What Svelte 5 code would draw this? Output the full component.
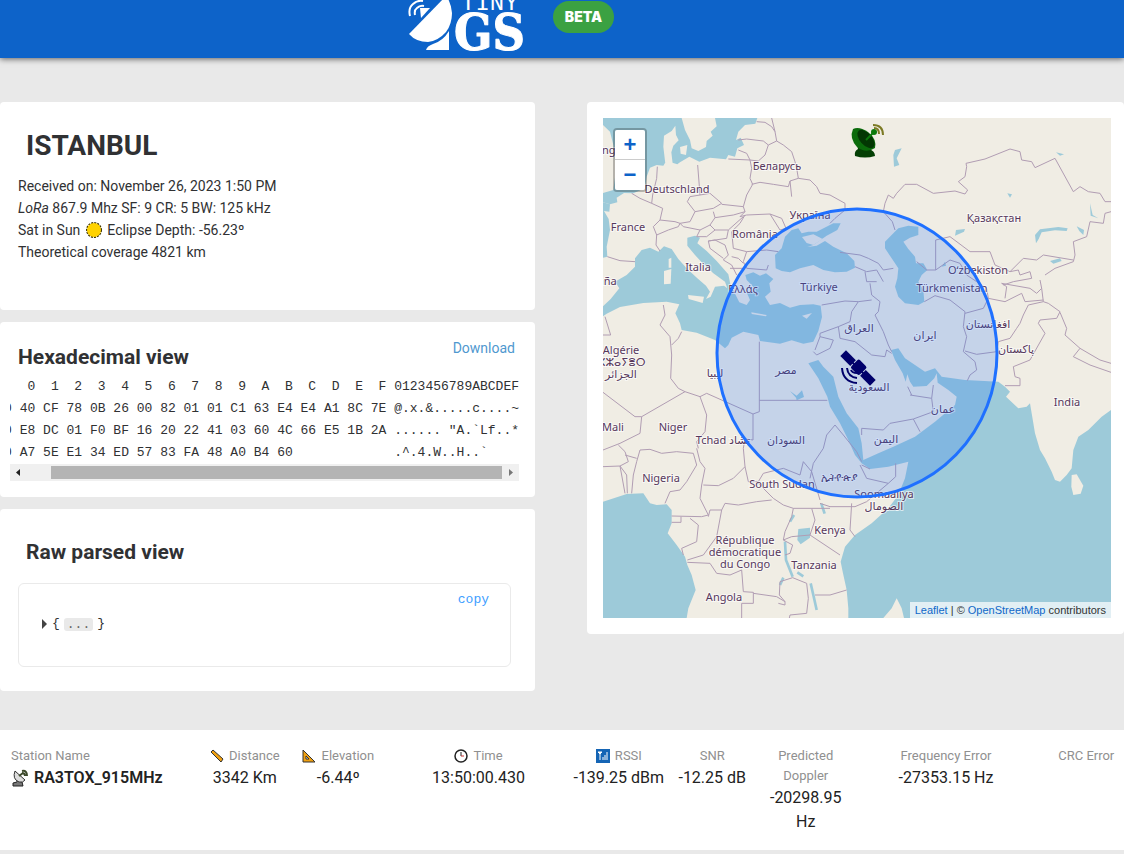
<script lang="ts">
	type Label = { x: number; y: number; text: string };

	const hexRows = [
		{
			offset: '0000',
			bytes: '40 CF 78 0B 26 00 82 01 01 C1 63 E4 E4 A1 8C 7E',
			ascii: '@.x.&.....c....~'
		},
		{
			offset: '0010',
			bytes: 'E8 DC 01 F0 BF 16 20 22 41 03 60 4C 66 E5 1B 2A',
			ascii: '...... "A.`Lf..*'
		},
		{
			offset: '0020',
			bytes: 'A7 5E E1 34 ED 57 83 FA 48 A0 B4 60',
			ascii: '.^.4.W..H..`'
		}
	];

	const digits = '0123456789ABCDEF';
	const hexHeader = '    ' + [...digits].map((d) => '  ' + d).join('') + ' ' + digits;
	const hexDump = [
		hexHeader,
		...hexRows.map((r) => `${r.offset} ${r.bytes.padEnd(47)} ${r.ascii.padEnd(16)}`)
	].join('\n');

	// country labels, in map pixels
	const labels: Label[] = [
		{ x: 14, y: 36, text: 'England' },
		{ x: 74, y: 75, text: 'Deutschland' },
		{ x: 174, y: 52, text: 'Беларусь' },
		{ x: 207, y: 101, text: 'Україна' },
		{ x: 25, y: 113, text: 'France' },
		{ x: 152, y: 120, text: 'România' },
		{ x: 95, y: 153, text: 'Italia' },
		{ x: -5, y: 167, text: 'España' },
		{ x: 391, y: 104, text: 'Қазақстан' },
		{ x: 375, y: 156, text: 'Oʻzbekiston' },
		{ x: 349, y: 174, text: 'Türkmenistan' },
		{ x: 216, y: 173, text: 'Türkiye' },
		{ x: 140, y: 175, text: 'Ελλάς' },
		{ x: 256, y: 214, text: 'العراق' },
		{ x: 322, y: 221, text: 'ایران' },
		{ x: 385, y: 210, text: 'افغانستان' },
		{ x: 413, y: 235, text: 'پاکستان' },
		{ x: 464, y: 288, text: 'India' },
		{ x: 18, y: 236, text: 'Algérie' },
		{ x: 14, y: 248, text: 'ⵍⵣⵣⴰⵢⴻⵔ' },
		{ x: 18, y: 260, text: 'الجزائر' },
		{ x: 112, y: 259, text: 'ليبيا' },
		{ x: 183, y: 256, text: 'مصر' },
		{ x: 266, y: 273, text: 'السعودية' },
		{ x: 340, y: 295, text: 'عمان' },
		{ x: 283, y: 325, text: 'اليمن' },
		{ x: 10, y: 313, text: 'Mali' },
		{ x: 70, y: 313, text: 'Niger' },
		{ x: 120, y: 326, text: 'Tchad تشاد' },
		{ x: 183, y: 326, text: 'السودان' },
		{ x: 58, y: 364, text: 'Nigeria' },
		{ x: 179, y: 370, text: 'South Sudan' },
		{ x: 236, y: 363, text: 'ኢትዮጵያ' },
		{ x: 281, y: 380, text: 'Soomaaliya' },
		{ x: 281, y: 392, text: 'الصومال' },
		{ x: 227, y: 416, text: 'Kenya' },
		{ x: 142, y: 426, text: 'République' },
		{ x: 142, y: 438, text: 'démocratique' },
		{ x: 142, y: 450, text: 'du Congo' },
		{ x: 211, y: 451, text: 'Tanzania' },
		{ x: 121, y: 483, text: 'Angola' }
	];

	// map shapes use a grid three times finer than the map pixels
	const seas = [
		'M9 9H245L255 45 270 75 275 100 295 108 318 96 320 78 338 62 332 50 350 34 345 9H472L466 26 435 30 415 50 408 75 422 68 432 90 412 100 405 125 385 120 378 133 330 128 298 140 268 125 240 142 232 148 212 142 195 144 190 152 170 150 150 158 140 185 135 220 100 235 72 234 50 248 52 262 30 268 9 262V234L40 225 48 165 40 90 30 50 9 30Z',
		'M9 262L30 268 28 290 12 288 26 312 30 345 20 395 22 425 9 428Z',
		'M105 430L125 405 150 398 175 410 192 394 215 402 235 432 262 462 292 490 318 512 330 530 318 552 332 545 345 515 372 512 382 520 375 500 340 475 305 442 285 420 262 392 262 368 285 362 300 368 292 385 320 408 350 438 385 478 392 512 402 530 418 562 440 570 450 555 440 532 468 528 455 510 440 495 436 480 460 472 480 482 498 475 520 492 508 505 512 530 495 545 510 570 540 564 570 578 600 570 640 568 662 572 666 606 655 648 640 680 610 686 575 676 540 686 480 678 475 660 430 650 395 668 385 690 375 700 345 675 290 653 245 645 240 625 226 595 238 568 200 560 130 564 60 576 20 596 9 604V574L32 552 58 520 45 500 80 480 105 455Z',
		'M527 460L525 420 545 400 555 365 575 345 595 340 605 355 625 350 650 350 700 325 722 325 712 345 680 362 640 390 622 396 650 392 675 378 700 395 740 415 763 438 765 458 740 470 705 472 670 465 640 450 600 460 570 472 545 468Z',
		'M925 332L955 335 955 360 930 368 910 380 925 402 945 425 948 445 970 445 982 465 965 480 955 500 970 525 973 560 955 570 915 565 895 545 885 515 892 490 895 460 875 430 855 400 855 380 880 355 895 340Z',
		'M603 704L625 745 655 735 670 755 700 785 715 845 740 895 775 940 785 985 790 1035 835 1015 880 995 945 965 1005 920 1065 870 1070 845 1045 825 1013 803 1010 775 1003 790 980 813 940 815 930 800 922 778 917 800 908 775 885 735 873 705 895 700 915 730 945 750 975 770 1005 760 1025 785 1095 795 1195 800 1215 815 1230 830 1218 845 1255 880 1280 875 1290 865 1295 895 1305 955 1320 1005 1335 1030 1355 1070 1365 1095 1380 1100 1400 1080 1415 1060 1420 1005 1435 965 1465 945 1505 905 1533 885V1509H745V1480L740 1425 728 1370 722 1340 735 1295 765 1260 815 1225 865 1180 895 1140 915 1090 925 1040 865 1055 810 1062 785 1045 765 1020 745 975 720 925 690 875 682 845 655 790 625 745Z',
		'M9 1160L80 1137 130 1135 150 1165 170 1170 200 1168 215 1185 215 1225 203 1255 230 1290 255 1325 262 1350 275 1380 287 1425 265 1480 260 1509H9Z'
	];

	const islands = [
		'M192 62L215 48 226 32 228 60 236 76 220 92 214 112 218 146 196 146 190 95Z',
		'M240 96L262 90 258 120 242 116Z',
		'M206 432L214 428 214 458 206 458Z',
		'M192 468L214 462 212 506 192 508Z',
		'M264 540L312 545 308 564 266 552Z',
		'M454 592L500 600 498 604 455 597Z',
		'M606 602L636 594 620 611Z',
		'M606 366L640 358 668 372 640 390 620 384Z',
		'M1415 1080L1430 1078 1450 1112 1442 1136 1420 1140 1414 1115Z',
		'M850 1509L875 1480 890 1450 905 1480 912 1509Z'
	];

	const lakes = [
		'M595 1242L630 1238V1268L602 1288 592 1275Z',
		'M1308 385L1305 360 1320 343 1375 336 1403 340 1400 348 1365 346 1325 352 1316 372Z',
		'M1430 334L1452 345 1450 360 1438 348Z',
		'M1350 438L1380 430 1385 438 1360 446Z',
		'M1068 345L1095 342 1092 350 1065 362Z',
		'M1025 455L1035 440 1038 452Z',
		'M880 120L885 105 905 100 890 130 898 150 882 155Z',
		'M1470 265L1478 300 1495 310 1472 302Z',
		'M1368 112L1392 118 1380 122Z',
		'M570 828L590 842 606 826 612 846 590 856 588 848Z',
		'M1222 235L1236 238 1230 248Z'
	];

	const rivers = [
		'M555 1280L558 1335 578 1385',
		'M632 1405L640 1440 650 1485',
		'M664 1166L674 1196',
		'M570 1220L582 1200',
		'M592 1372L610 1384',
		'M540 1410L550 1388'
	];

	const borders = [
		'M415 75L440 72 490 78 505 90 530 78 525 50 515 35 495 22 470 20M525 50L515 9M530 78L550 90 575 110 585 140 590 160 595 190 570 198 565 215 520 208 480 202 455 208',
		'M505 90L495 120 475 138 450 135M385 132L450 135 455 160 450 190 458 208 440 240 430 275 435 290M415 105L440 115 450 135',
		'M595 190L630 195 650 215 660 235 690 240 735 265 735 285 705 310 690 325M570 198L575 245',
		'M435 290L420 305 440 300 510 297 545 310 558 340 540 345 510 297',
		'M293 150L300 240 270 245 262 260 285 290 340 280M300 240L330 235 365 265 340 280M365 268L430 275M340 290L345 308 400 300 435 290',
		'M285 290L270 320 240 325 250 335 300 345 330 330 345 308M160 335L180 315 225 320 240 325 235 335 205 345 170 360 160 335M95 235L120 250 155 265 188 280 180 315M172 155L170 190 158 240 155 265M170 360L168 390 180 408',
		'M330 330L345 345 385 345 430 305M300 345L290 365 320 365 345 345M385 345L380 370 325 378 330 400 370 430M325 378L345 375 375 390 385 420 370 435 395 450 410 480M435 300L420 325 395 350 400 400 440 410 500 405 535 410M440 410L430 440 440 460 500 465 505 450M395 425L415 430 430 445M390 460L430 460',
		'M22 425L60 437 105 440M720 412L780 420 805 430 835 445 850 465 880 460M765 455L800 470 830 465 850 500M795 470L800 500 830 500',
		'M885 345L877 320 850 290 855 265 865 240 880 250 890 235 915 208 950 208 1000 235 1065 228 1095 237 1103 225 1075 200 1095 185 1100 155 1098 145 1155 132 1230 102 1260 110 1265 135 1295 140 1305 158 1365 130 1420 230 1440 215 1465 230 1500 235 1515 260 1533 260',
		'M1533 290L1515 295 1510 325 1470 320 1460 365 1420 380 1425 420 1420 440 1365 460 1335 480M1007 465V375L1050 365 1110 410 1170 410 1185 450 1230 470 1270 430 1310 435 1330 420 1420 435M950 440L980 465 1007 465 1050 435 1080 445 1100 480 1130 500M1230 470L1255 465 1260 480 1290 470 1295 490 1240 500 1210 510',
		'M973 560L1005 542 1050 555 1095 590 1090 635 1100 665 1090 710 1125 740 1130 765 1110 780 1102 797M1095 708L1130 718 1190 710 1195 680 1230 670 1250 640 1260 625 1270 600 1285 570 1330 560 1345 565',
		'M1095 595L1150 580 1165 550 1160 520 1130 500M1165 550L1215 560 1265 535 1275 560 1330 555M1205 505L1220 515 1215 550M1205 505L1290 520 1310 535 1325 520 1320 495M1325 520L1330 560',
		'M1345 565L1380 590 1370 610 1320 615 1315 625 1335 655 1290 735 1240 755 1245 785 1260 790 1260 812 1215 812M1380 592L1400 640 1395 660 1440 700 1500 735 1533 745M1440 700L1420 725 1470 750 1533 772',
		'M810 505L815 540 840 560 835 590 825 600 850 650 865 690 875 710M765 680L815 720 855 725 860 705 875 715M640 710L650 720 690 700 700 675 660 665 645 705M660 655L715 635 720 670 765 680M715 635L750 620 755 590 775 560 735 558 665 570M775 560L815 555M660 665V655',
		'M478 680V890L459 897V975L430 970M478 856H682M300 845L320 835 459 897M190 570L195 600 180 630 210 665 215 720 212 790 235 820 255 830 300 845M215 690L235 670 245 650M255 830L125 905 105 905 9 832M125 905L120 955 60 985 9 1005M9 660L32 660 15 605M300 845L320 900 315 950 290 980 295 1000',
		'M705 930L680 960 670 1000 640 1045 630 1090M705 930L730 960 770 1010 785 1040M930 840L995 850 1000 810M995 850L1000 890 940 912 960 950M940 912L870 925 850 945 785 940V960M923 815L935 840',
		'M9 1055L60 1053 75 1135M95 1135L100 1080 110 1040 120 1005 150 1003 185 1015 230 1010 280 1015 290 1050 260 1100 240 1125 210 1130 195 1165M60 1053L85 1040 75 1010 55 990M75 1020L110 1030M60 1053L80 1080 82 1135',
		'M290 1000L300 1040 315 1060 305 1110 300 1150 325 1200 305 1205 215 1203M310 1110L355 1112 400 1090 435 1055 445 1100 475 1100M325 1205L330 1185 365 1185 375 1165 415 1170 470 1160 515 1155M470 1100L520 1150 550 1170 580 1180M435 1055L430 1000 435 970',
		'M365 1185L350 1265 310 1320 262 1335M215 1222H243V1205M270 1210L295 1230 290 1280 245 1300 250 1320M262 1342L330 1345 350 1375 390 1380 425 1365 430 1430 460 1432V1465H425V1509M460 1435L530 1445 555 1460 555 1470 535 1465',
		'M580 1180L575 1205 555 1250 550 1275 575 1265 630 1260 720 1320M580 1180L635 1180 645 1215 630 1260M635 1180L690 1180M690 1175L660 1165M755 1165L750 1245 765 1265M475 1100L490 1075 550 1060 600 1080 610 1040 635 1070 660 1155M690 1175L765 1175 800 1160 865 1105M780 1050L800 1090 865 1105M785 1050L810 1062M887 1045V1085L865 1105M578 1388L540 1400 538 1440 555 1460M578 1388L620 1405 625 1450 620 1495 570 1500 568 1509M645 1440L690 1440 740 1425M550 1275L578 1290 570 1315 555 1320'
	];
</script>

<header class="topbar">
	<svg class="logo" width="118" height="58" viewBox="0 0 118 58" role="img" aria-label="Tiny GS">
		<path d="M38 -4 1 34Q8 42 20 42Q30 41 38 32Q44 24 44 13Q43 2 38 -4Z" fill="#fff" />
		<path d="M41 31V50H18Q19 46 25 44Q35 41 41 31Z" fill="#fff" />
		<path d="M12 8 22 8 13 18Z" fill="#fff" />
		<path d="M2 16Q0 8 5 4Q9 0 15 1M7 15Q6 10 9 8Q12 5 16 6" fill="none" stroke="#fff" stroke-width="2" />
		<text class="logo-tiny" x="53" y="10">TINY</text>
		<text class="logo-gs" x="46" y="50">GS</text>
	</svg>
	<span class="beta">BETA</span>
</header>

<main class="columns">
	<div class="details">
		<section class="card packet">
			<h1>ISTANBUL</h1>
			<p>Received on: November 26, 2023 1:50 PM</p>
			<p><em>LoRa</em> 867.9 Mhz SF: 9 CR: 5 BW: 125 kHz</p>
			<p>
				Sat in Sun
				<svg class="sun" width="18" height="18" viewBox="0 0 18 18" aria-hidden="true">
					<circle cx="9" cy="9" r="7" fill="none" stroke="#3a3000" stroke-width="2" stroke-dasharray="2 1" />
					<circle cx="9" cy="9" r="7" fill="#ffd200" />
				</svg>
				Eclipse Depth: -56.23º
			</p>
			<p>Theoretical coverage 4821 km</p>
		</section>

		<section class="card hex">
			<div class="hex-head">
				<h2>Hexadecimal view</h2>
				<a href="#download">Download</a>
			</div>
			<div class="hex-scroll">
				<pre>{hexDump}</pre>
			</div>
			<div class="scrollbar">
				<svg width="17" height="17" viewBox="0 0 17 17"><path d="M10 5v7L6 8.500z" fill="#222" /></svg>
				<div class="track"><div class="thumb"></div></div>
				<svg width="17" height="17" viewBox="0 0 17 17"><path d="M7 5v7l4-3.500z" fill="#777" /></svg>
			</div>
		</section>

		<section class="card raw">
			<h2>Raw parsed view</h2>
			<div class="json">
				<button class="copy" type="button">copy</button>
				<div class="tree">
					<svg width="6" height="10" viewBox="0 0 6 10"><path d="M0 0v10l5-5z" fill="#444" /></svg>
					<span>&#123;</span>
					<button class="ellipsis" type="button">...</button>
					<span>&#125;</span>
				</div>
			</div>
		</section>
	</div>

	<section class="card map-card">
		<div class="map">
			<svg
				class="map-canvas"
				viewBox="0 0 508 500"
				preserveAspectRatio="xMidYMid slice"
				role="img"
				aria-label="Satellite coverage map"
			>
				<svg width="508" height="500" viewBox="9 9 1524 1500">
					{#each seas as d}<path class="sea" {d} />{/each}
					{#each islands as d}<path class="island" {d} />{/each}
					{#each lakes as d}<path class="sea" {d} />{/each}
					{#each rivers as d}<path class="river" {d} />{/each}
					{#each borders as d}<path class="border" {d} />{/each}
				</svg>
				{#each labels as l}
					<text class="label" x={l.x} y={l.y}>{l.text}</text>
				{/each}
				<ellipse class="coverage" cx="254" cy="235" rx="140" ry="144" />

				<!-- ground station -->
				<g transform="translate(247 6)">
					<path d="M5 32Q4 27 8 25L7 20H18L19 25Q25 27 25 32Q15 35 5 32Z" fill="#043f04" />
					<path d="M3 5Q9 2 18 8Q27 15 25 24Q16 30 7 23Q-1 14 3 5Z" fill="#0b6b0b" />
					<ellipse cx="16" cy="15" rx="6" ry="11" transform="rotate(-42 16 15)" fill="#033703" />
					<path d="M16 16 23 9" stroke="#0b7a0b" stroke-width="2" />
					<circle cx="24" cy="8" r="3" fill="#0b7a0b" />
					<path
						d="M24 4Q29 4 29 10M23 1Q33 1 33 11"
						fill="none"
						stroke="#7c7a24"
						stroke-width="2"
					/>
				</g>

				<!-- satellite -->
				<g transform="translate(238 233)">
					<g transform="rotate(45 17 17)" fill="#00006b">
						<rect x="-4" y="13" width="14" height="8" />
						<rect x="24" y="13" width="14" height="8" />
						<rect x="11" y="10" width="12" height="12" rx="2" />
						<path d="M9 16h16v2H9z" />
					</g>
					<path
						d="M10 19Q11 22 16 22M6 17Q7 26 16 27M1 17Q2 31 16 32"
						fill="none"
						stroke="#00006b"
						stroke-width="2"
					/>
				</g>
			</svg>

			<div class="zoom">
				<button type="button" aria-label="Zoom in">+</button>
				<button type="button" aria-label="Zoom out">−</button>
			</div>

			<div class="attribution">
				<a href="#leaflet">Leaflet</a> | © <a href="#osm">OpenStreetMap</a> contributors
			</div>
		</div>
	</section>
</main>

<section class="stations">
	<dl>
		<div class="stat name">
			<dt>Station Name</dt>
			<dd>
				<svg width="18" height="18" viewBox="0 0 18 18" aria-hidden="true">
					<path d="M2 17V14l4-1v-3l3 3h2l1 4z" fill="#777" stroke="#222" />
					<path d="M4 2Q1 10 8 13Q12 14 14 11Z" fill="#ddd" stroke="#333" />
					<path d="M8 7l4-3M11 2q5-1 5 5M11 4q3 0 3 3" fill="none" stroke="#3d4a2c" stroke-width="2" />
				</svg>
				RA3TOX_915MHz
			</dd>
		</div>
		<div class="stat">
			<dt>
				<svg width="14" height="14" viewBox="0 0 14 14" aria-hidden="true">
					<path d="M1 3 3 1 13 10 11 13Z" fill="#f0a010" stroke="#333" />
				</svg>
				Distance
			</dt>
			<dd>3342 Km</dd>
		</div>
		<div class="stat">
			<dt>
				<svg width="14" height="14" viewBox="0 0 14 14" aria-hidden="true">
					<path d="M1 1V13H13ZM4 7V10H7Z" fill="#f0a010" fill-rule="evenodd" stroke="#333" />
				</svg>
				Elevation
			</dt>
			<dd>-6.44º</dd>
		</div>
		<div class="stat">
			<dt>
				<svg width="14" height="14" viewBox="0 0 14 14" aria-hidden="true">
					<circle cx="7" cy="7" r="6" fill="#fff" stroke="#222" stroke-width="1.500" />
					<path d="M7 3V7" stroke="#222" />
					<path d="M7 7H10" stroke="#c33" />
				</svg>
				Time
			</dt>
			<dd>13:50:00.430</dd>
		</div>
		<div class="stat">
			<dt>
				<svg width="14" height="14" viewBox="0 0 14 14" aria-hidden="true">
					<rect width="14" height="14" fill="#1565b5" />
					<path d="M2 3H6L4 5ZM4 4V11M7 8V11M9 6V11M11 3V11" fill="#fff" stroke="#fff" />
				</svg>
				RSSI
			</dt>
			<dd>-139.25 dBm</dd>
		</div>
		<div class="stat">
			<dt>SNR</dt>
			<dd>-12.25 dB</dd>
		</div>
		<div class="stat">
			<dt>Predicted Doppler</dt>
			<dd>-20298.95 Hz</dd>
		</div>
		<div class="stat">
			<dt>Frequency Error</dt>
			<dd>-27353.15 Hz</dd>
		</div>
		<div class="stat">
			<dt>CRC Error</dt>
			<dd></dd>
		</div>
	</dl>
</section>

<style>
	:global(body) {
		margin: 0;
		background: #e9e9e9;
		color: #303133;
		font-family: Roboto, 'Liberation Sans', sans-serif;
		font-size: 14px;
		line-height: 22px;
		overflow-x: hidden;
	}

	h1,
	h2,
	p,
	pre,
	dl,
	dd {
		margin: 0;
	}

	a {
		text-decoration: none;
	}

	button {
		border: 0;
		padding: 0;
		font: inherit;
		cursor: pointer;
	}

	.topbar {
		display: flex;
		justify-content: center;
		align-items: flex-start;
		gap: 27px;
		height: 58px;
		padding-right: 102px;
		background: #0d63c9;
		box-shadow: 0 1px 6px rgba(0, 0, 0, 0.6);
	}

	.logo-tiny {
		font: 24px 'Liberation Mono', monospace;
		fill: #fff;
	}

	.logo-gs {
		font: bold 50px 'DejaVu Serif Condensed', 'DejaVu Serif', serif;
		fill: #fff;
		stroke: #fff;
		stroke-width: 1px;
		stroke-linejoin: round;
	}

	.beta {
		margin-top: 1px;
		padding: 0 12px;
		border-radius: 16px;
		background: #3ba142;
		color: #fff;
		font-family: Inter, sans-serif;
		font-size: 14px;
		font-weight: 900;
		line-height: 32px;
	}

	.columns {
		display: grid;
		grid-template-columns: minmax(0, 535fr) minmax(0, 537fr);
		align-items: start;
		gap: 52px;
		margin-top: 44px;
	}

	.details {
		display: flex;
		flex-direction: column;
		gap: 12px;
	}

	.card {
		background: #fff;
		border-radius: 4px;
	}

	h1 {
		font-size: 28px;
		line-height: 40px;
	}

	h2 {
		font-size: 21px;
		line-height: 28px;
	}

	.packet {
		padding: 24px 18px 47px;
	}

	.packet h1 {
		margin: 0 8px 9px;
	}

	.sun {
		margin: 0 1px;
		vertical-align: -4px;
	}

	.hex {
		padding: 15px 16px 16px 10px;
	}

	.hex-head {
		display: flex;
		justify-content: space-between;
		align-items: flex-start;
		padding: 0 4px 5px 8px;
	}

	.hex-head h2 {
		margin-top: 6px;
	}

	.hex-head a {
		color: #4f98cf;
	}

	.hex-scroll {
		display: flex;
		justify-content: flex-end;
		overflow: hidden;
	}

	pre,
	.json {
		font-family: 'Liberation Mono', monospace;
		font-size: 13px;
	}

	.scrollbar {
		display: flex;
		height: 17px;
		background: #f0f0f0;
	}

	.track {
		display: flex;
		flex: 1;
		justify-content: flex-end;
		padding: 2px 0;
	}

	.thumb {
		width: 95%;
		background: #b4b4b4;
	}

	.raw {
		padding: 29px 24px 24px 18px;
	}

	.raw h2 {
		margin: 0 8px 17px;
	}

	.json {
		display: flex;
		flex-direction: column;
		padding: 6px 21px 32px;
		border: 1px solid #eaeaea;
		border-radius: 6px;
		line-height: 20px;
	}

	.copy {
		align-self: flex-end;
		margin-bottom: 4px;
		background: none;
		color: #409eff;
	}

	.tree {
		display: flex;
		align-items: center;
		gap: 4px;
		padding-left: 2px;
	}

	.ellipsis {
		padding: 0 3px;
		border-radius: 3px;
		background: #e9e9e9;
		color: #666;
		line-height: 13px;
	}

	.map-card {
		padding: 16px 13px 16px 16px;
	}

	.map {
		position: relative;
		height: 500px;
		overflow: hidden;
		background: #f0ede4;
	}

	.map-canvas {
		display: block;
		width: 100%;
		height: 100%;
	}

	.sea {
		fill: #9dcad9;
	}

	.island {
		fill: #f0ede4;
	}

	.river {
		fill: none;
		stroke: #9dcad9;
		stroke-width: 8px;
	}

	.border {
		fill: none;
		stroke: #b19db3;
		stroke-width: 3px;
		stroke-linejoin: round;
	}

	.label {
		font-family: 'Noto Sans', 'DejaVu Sans', sans-serif;
		font-size: 11px;
		text-anchor: middle;
		fill: #57385c;
		stroke: rgba(255, 255, 255, 0.6);
		stroke-width: 2px;
		paint-order: stroke;
	}

	.coverage {
		fill: #1a6dff;
		fill-opacity: 0.2;
		stroke: #1f70ff;
		stroke-width: 3px;
	}

	.zoom {
		position: absolute;
		top: 10px;
		left: 10px;
		display: flex;
		flex-direction: column;
		border: 2px solid rgba(0, 0, 0, 0.25);
		border-radius: 4px;
		background-clip: padding-box;
	}

	.zoom button {
		width: 30px;
		height: 30px;
		background: #fff;
		color: #0d63c9;
		font: bold 22px/30px 'Liberation Sans', sans-serif;
	}

	.zoom button:first-child {
		border-bottom: 1px solid #ccc;
		border-radius: 2px 2px 0 0;
	}

	.zoom button:last-child {
		border-radius: 0 0 2px 2px;
	}

	.attribution {
		position: absolute;
		right: 0;
		bottom: 0;
		padding: 0 5px;
		background: rgba(255, 255, 255, 0.7);
		color: #333;
		font: 11px/16px 'Liberation Sans', sans-serif;
	}

	.attribution a {
		color: #1068c9;
	}

	.stations {
		margin-top: 39px;
		margin-bottom: 4px;
		padding: 16px 0 16px 11px;
		background: #fff;
		overflow: hidden;
	}

	dl {
		display: grid;
		grid-template-columns: 2fr 1fr 1fr 2fr 1fr 1fr 1fr 2fr 1fr;
		margin-right: -9px;
	}

	.stat {
		min-width: 0;
		text-align: center;
	}

	dt {
		padding: 0 16px;
		color: #909090;
		font-size: 13px;
		line-height: 20px;
	}

	.stat:has(dt svg) dt {
		padding: 0;
	}

	.stat:last-child dt {
		padding: 0;
	}

	dt svg {
		margin-right: 2px;
		vertical-align: -3px;
	}

	dd {
		color: #222;
		font-size: 16px;
		line-height: 24px;
	}

	.name {
		text-align: left;
	}

	.name dt {
		padding: 0;
	}

	.name dd {
		font-weight: 600;
	}

	.name dd svg {
		margin-right: 1px;
		vertical-align: -4px;
	}
</style>
